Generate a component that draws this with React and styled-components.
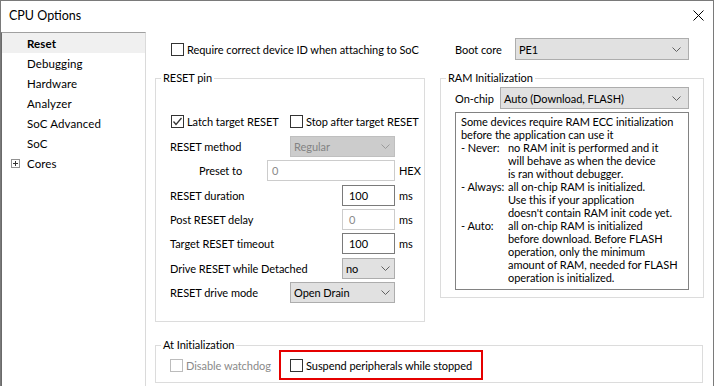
import React from 'react';
import styled, { createGlobalStyle } from 'styled-components';

const GlobalStyle = createGlobalStyle`
  html, body { margin: 0; padding: 0; background: #fff; overflow: hidden; }
  body {
    font-family: Lato, 'Open Sans', 'Liberation Sans', sans-serif;
    font-size: 11px;
    letter-spacing: -0.05px;
    color: #000;
  }
  * { box-sizing: border-box; }
`;

const Window = styled.div`
  width: 714px;
  height: 390px;
  border: 1px solid #7a7a7a;
  display: flex;
  flex-direction: column;
  background: #fff;
`;

const TitleBar = styled.div`
  height: 31px;
  flex: none;
  display: flex;
  align-items: center;
  justify-content: space-between;
  padding: 0 9px 2px 8px;
  font-size: 12.5px;
  letter-spacing: 0;
`;

const Body = styled.div`
  flex: 1;
  display: flex;
  min-height: 0;
`;

const Tree = styled.div`
  width: 145px;
  flex: none;
  border-top: 1px solid #a0a0a0;
  border-left: 1px solid #6a6a6a;
  border-right: 1px solid #dadada;
  font-size: 11.5px;
  letter-spacing: 0.1px;
`;

const TreeItem = styled.div`
  height: 20px;
  display: flex;
  align-items: center;
  padding-left: ${p => (p.$expander ? 9 : 25)}px;
  gap: 7px;
  background: ${p => (p.$selected ? '#f0f0f0' : 'transparent')};
  font-weight: ${p => (p.$selected ? 700 : 400)};
`;

const Content = styled.div`
  flex: 1;
  padding: 6px 0 0 9px;
`;

const Columns = styled.div`
  display: grid;
  grid-template-columns: 270px 264px;
  column-gap: 15px;
  align-items: start;
  margin-top: ${p => p.$mt || 0}px;
`;

const TopLeft = styled.div`
  height: 22px;
  display: flex;
  align-items: center;
  padding-left: 16px;
`;

const TopRight = styled.div`
  height: 22px;
  display: flex;
  align-items: center;
  padding: 0 15px;
`;

const Label = styled.span`
  flex: none;
  width: ${p => (p.$w ? `${p.$w}px` : 'auto')};
  padding-left: ${p => p.$indent || 0}px;
  color: ${p => (p.$disabled ? '#8a8a8a' : '#000')};
  white-space: nowrap;
`;

const Group = styled.fieldset`
  margin: ${p => p.$mt || 0}px 0 0 0;
  padding: 0;
  min-width: 0;
  border: 1px solid #dcdcdc;
  height: ${p => p.$h}px;
  width: ${p => (p.$w ? `${p.$w}px` : 'auto')};
`;

const Legend = styled.legend`
  margin-left: 5px;
  padding: 0 2px;
  line-height: 14px;
`;

const ResetBody = styled.div`
  padding: 26px 0 0 14px;
`;

const CheckRow = styled.div`
  height: 20px;
  display: flex;
  align-items: center;
  padding-left: 1px;
`;

const CheckItem = styled.label`
  display: flex;
  align-items: center;
  gap: 3px;
  width: ${p => (p.$w ? `${p.$w}px` : 'auto')};
  flex: none;
  white-space: nowrap;
  color: ${p => (p.$disabled ? '#8a8a8a' : '#000')};
`;

const Box = styled.span`
  width: 13px;
  height: 13px;
  flex: none;
  border: 1px solid ${p => (p.$disabled ? '#bcbcbc' : '#333')};
  background: #fff;
  display: flex;
  align-items: center;
  justify-content: center;
`;

const Params = styled.div`
  margin-top: 5px;
  display: flex;
  flex-direction: column;
  gap: 3.33px;
`;

const ParamRow = styled.div`
  height: 21px;
  display: flex;
  align-items: center;
`;

const Spacer = styled.span`
  flex: 1;
`;

const Unit = styled.span`
  width: 29px;
  flex: none;
  padding-left: 4px;
`;

const Select = styled.div`
  width: ${p => (p.$w ? `${p.$w}px` : 'auto')};
  flex: ${p => (p.$w ? 'none' : 1)};
  height: ${p => p.$h || 21}px;
  display: flex;
  align-items: center;
  justify-content: space-between;
  padding: 0 ${p => p.$pr || 4}px 0 3px;
  background: ${p => (p.$disabled ? '#cccccc' : '#e1e1e1')};
  border: 1px solid ${p => (p.$disabled ? '#bfbfbf' : '#adadad')};
  color: ${p => (p.$disabled ? '#838383' : '#000')};
  white-space: nowrap;
`;

const Input = styled.div`
  width: ${p => p.$w}px;
  flex: none;
  height: 21px;
  display: flex;
  align-items: center;
  padding-left: ${p => p.$pl || 6}px;
  background: #fff;
  border: 1px solid ${p => (p.$disabled ? '#cccccc' : '#7a7a7a')};
  color: ${p => (p.$disabled ? '#8a8a8a' : '#000')};
`;

const RamBody = styled.div`
  padding: 2px 14px 0 14px;
`;

const OnChipRow = styled.div`
  height: 22px;
  display: flex;
  align-items: center;
`;

const InfoBox = styled.div`
  margin-top: 3px;
  height: 178px;
  border: 1px solid #828282;
  padding: 2px 4px 0 5px;
  line-height: 13px;
  white-space: nowrap;
`;

const Terms = styled.div`
  display: grid;
  grid-template-columns: 47px 1fr;
`;

const InitRow = styled.div`
  margin-top: -2px;
  height: 30px;
  display: flex;
  align-items: center;
  padding-left: 14px;
`;

const Highlight = styled.div`
  height: 30px;
  display: flex;
  align-items: center;
  padding: 0 9px;
  border: 2px solid #e50000;
`;

const Chevron = ({ disabled }) => (
  <svg width="9" height="5" viewBox="0 0 9 5">
    <polyline points="0.5,0.5 4.5,4.5 8.5,0.5" fill="none" stroke={disabled ? '#9a9a9a' : '#606060'} strokeWidth="1" />
  </svg>
);

const Check = ({ checked, disabled, children, w }) => (
  <CheckItem $w={w} $disabled={disabled}>
    <Box $disabled={disabled}>
      {checked && (
        <svg width="11" height="11" viewBox="0 0 11 11">
          <polyline points="1.5,5.5 4,8.5 9.5,2" fill="none" stroke="#333" strokeWidth="1.3" />
        </svg>
      )}
    </Box>
    {children}
  </CheckItem>
);

const Dropdown = ({ value, w, h, pr, disabled }) => (
  <Select $w={w} $h={h} $pr={pr} $disabled={disabled}>
    <span>{value}</span>
    <Chevron disabled={disabled} />
  </Select>
);

const treeItems = ['Reset', 'Debugging', 'Hardware', 'Analyzer', 'SoC Advanced', 'SoC'];

const ramLines = [
  ['- Never:', ['no RAM init is performed and it', 'will behave as when the device', 'is ran without debugger.']],
  ['- Always:', ['all on-chip RAM is initialized.', 'Use this if your application', "doesn't contain RAM init code yet."]],
  ['- Auto:', ['all on-chip RAM is initialized', 'before download. Before FLASH', 'operation, only the minimum', 'amount of RAM, needed for FLASH', 'operation is initialized.']],
];

export default function App() {
  return (
    <>
      <GlobalStyle />
      <Window>
        <TitleBar>
          <span>CPU Options</span>
          <svg width="11" height="11" viewBox="0 0 11 11">
            <path d="M0.5 0.5 L10.5 10.5 M10.5 0.5 L0.5 10.5" stroke="#000" strokeWidth="1" />
          </svg>
        </TitleBar>
        <Body>
          <Tree>
            {treeItems.map((t, i) => (
              <TreeItem key={t} $selected={i === 0}>{t}</TreeItem>
            ))}
            <TreeItem $expander>
              <svg width="9" height="9" viewBox="0 0 9 9">
                <rect x="0.5" y="0.5" width="8" height="8" fill="#fff" stroke="#919191" />
                <path d="M2 4.5 H7 M4.5 2 V7" stroke="#333" strokeWidth="1" />
              </svg>
              Cores
            </TreeItem>
          </Tree>

          <Content>
            <Columns>
              <TopLeft>
                <Check>Require correct device ID when attaching to SoC</Check>
              </TopLeft>
              <TopRight>
                <Label $w={60}>Boot core</Label>
                <Dropdown value="PE1" h={22} pr={7} />
              </TopRight>
            </Columns>

            <Columns $mt={11}>
              <Group $h={251}>
                <Legend>RESET pin</Legend>
                <ResetBody>
                  <CheckRow>
                    <Check checked w={119}>Latch target RESET</Check>
                    <Check>Stop after target RESET</Check>
                  </CheckRow>
                  <Params>
                    <ParamRow>
                      <Label>RESET method</Label>
                      <Spacer />
                      <Dropdown value="Regular" w={105} disabled />
                      <Unit />
                    </ParamRow>
                    <ParamRow>
                      <Label $indent={29}>Preset to</Label>
                      <Spacer />
                      <Input $w={128} $pl={4} $disabled>0</Input>
                      <Unit>HEX</Unit>
                    </ParamRow>
                    <ParamRow>
                      <Label>RESET duration</Label>
                      <Spacer />
                      <Input $w={53}>100</Input>
                      <Unit>ms</Unit>
                    </ParamRow>
                    <ParamRow>
                      <Label>Post RESET delay</Label>
                      <Spacer />
                      <Input $w={53} $disabled>0</Input>
                      <Unit>ms</Unit>
                    </ParamRow>
                    <ParamRow>
                      <Label>Target RESET timeout</Label>
                      <Spacer />
                      <Input $w={53}>100</Input>
                      <Unit>ms</Unit>
                    </ParamRow>
                    <ParamRow>
                      <Label>Drive RESET while Detached</Label>
                      <Spacer />
                      <Dropdown value="no" w={53} />
                      <Unit />
                    </ParamRow>
                    <ParamRow>
                      <Label>RESET drive mode</Label>
                      <Spacer />
                      <Dropdown value="Open Drain" w={105} />
                      <Unit />
                    </ParamRow>
                  </Params>
                </ResetBody>
              </Group>

              <Group $h={227}>
                <Legend>RAM Initialization</Legend>
                <RamBody>
                  <OnChipRow>
                    <Label $w={45}>On-chip</Label>
                    <Dropdown value="Auto (Download, FLASH)" h={22} pr={7} />
                  </OnChipRow>
                  <InfoBox>
                    <div>Some devices require RAM ECC initialization</div>
                    <div>before the application can use it</div>
                    <Terms>
                      {ramLines.map(([term, lines]) => (
                        <React.Fragment key={term}>
                          <div>{term}</div>
                          <div>
                            {lines.map(l => <div key={l}>{l}</div>)}
                          </div>
                        </React.Fragment>
                      ))}
                    </Terms>
                  </InfoBox>
                </RamBody>
              </Group>
            </Columns>

            <Group $h={45} $w={548} $mt={16}>
              <Legend>At Initialization</Legend>
              <InitRow>
                <Check disabled w={109}>Disable watchdog</Check>
                <Highlight>
                  <Check>Suspend peripherals while stopped</Check>
                </Highlight>
              </InitRow>
            </Group>
          </Content>
        </Body>
      </Window>
    </>
  );
}
